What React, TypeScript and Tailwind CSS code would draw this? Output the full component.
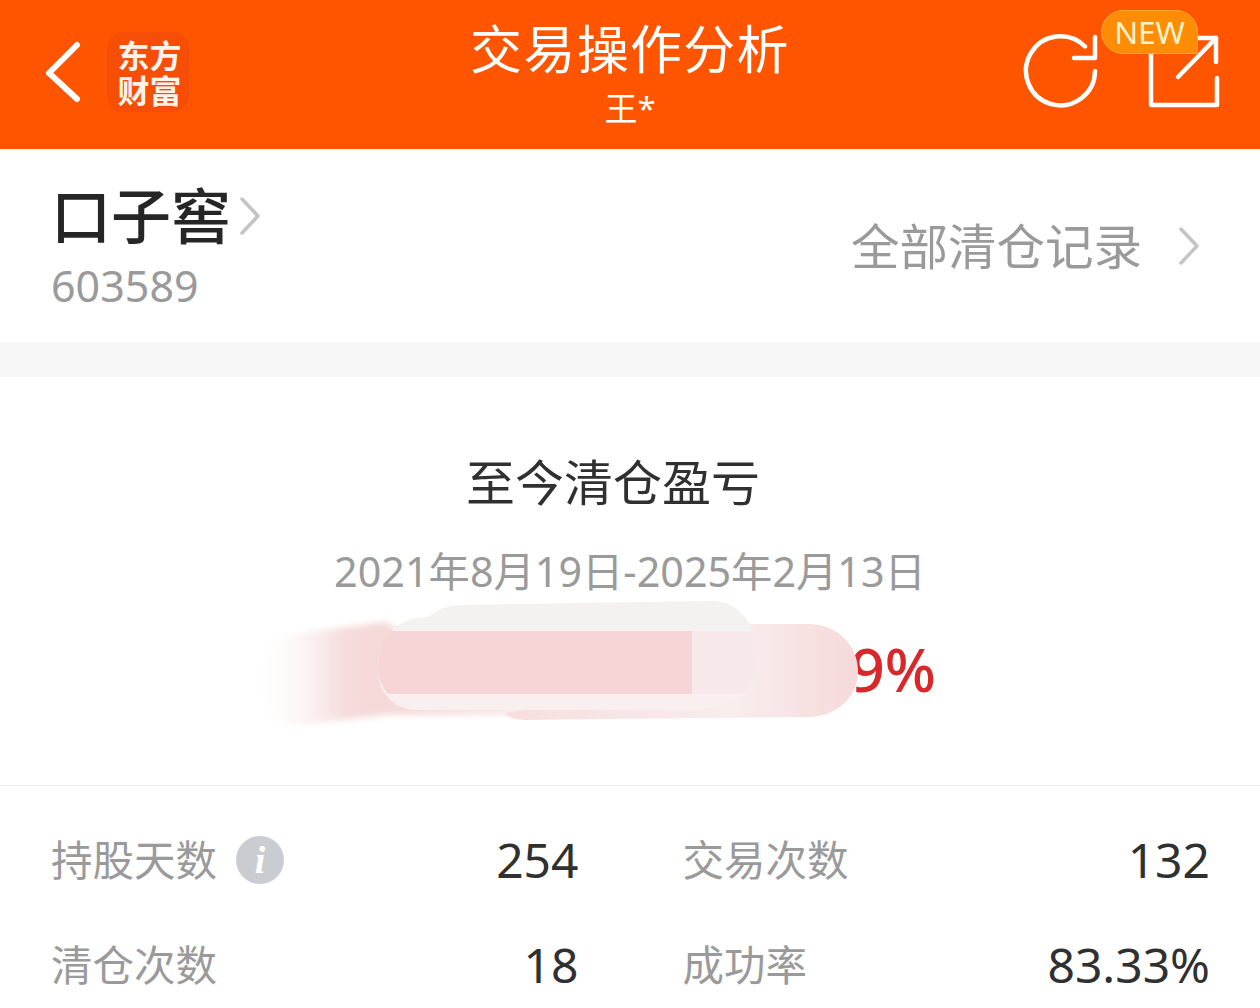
import React from 'react';

const cjk = { fontFamily: '"Noto Sans", "Noto Sans CJK SC", sans-serif' };

const stats = [
  { label: '清仓次数', value: '18', rightLabel: '成功率', rightValue: '83.33%' },
];

const Chevron: React.FC<{ className?: string }> = ({ className }) => (
  <svg viewBox="0 0 22 40" className={className} fill="none" stroke="currentColor" strokeWidth="3.5" strokeLinecap="round" strokeLinejoin="round">
    <path d="M3 3 L19 20 L3 37" />
  </svg>
);

// pasted-over smear hiding the real figure
const Smear: React.FC = () => (
  <svg className="absolute left-0 top-[-9px] w-[1260px] h-[140px]" viewBox="0 590 1260 140">
    <defs>
      <linearGradient id="leftFade" x1="258" x2="520" y1="0" y2="0" gradientUnits="userSpaceOnUse">
        <stop offset="0" stopColor="#f5d5d5" stopOpacity="0" />
        <stop offset="0.14" stopColor="#f7dfdf" stopOpacity="0.22" />
        <stop offset="0.32" stopColor="#f5d8d8" stopOpacity="0.85" />
        <stop offset="0.45" stopColor="#f5d8d8" />
        <stop offset="1" stopColor="#f9e8e8" />
      </linearGradient>
      <linearGradient id="rightFade" x1="510" x2="858" y1="0" y2="0" gradientUnits="userSpaceOnUse">
        <stop offset="0" stopColor="#f7dede" />
        <stop offset="0.65" stopColor="#f9eded" />
        <stop offset="1" stopColor="#f6d9da" />
      </linearGradient>
      <filter id="soften" x="-10%" y="-20%" width="120%" height="140%">
        <feGaussianBlur stdDeviation="3" />
      </filter>
    </defs>
    <path d="M258 680 C258 650 270 636 292 633 L385 621 L420 640 L520 700 L520 714 L385 714 L300 724 C275 726 258 710 258 680 Z" fill="url(#leftFade)" filter="url(#soften)" />
    <path d="M700 623 L808 623 C838 623 858 645 858 670 C858 695 838 716 808 716 L600 718 L525 719 C515 719 510 717 505 712 L700 680 Z" fill="url(#rightFade)" />
    <path d="M378 668 C378 640 392 617 428 616 C438 608 448 604 462 604 L712 600 C735 600 750 616 756 640 L757 660 C757 690 735 709 680 709 L420 709 C392 709 378 690 378 668 Z" fill="#f3f2f1" />
    <path d="M378 668 C378 650 382 640 388 630 L757 630 L757 660 C757 690 735 709 680 709 L420 709 C392 709 378 690 378 668 Z" fill="#f9efef" />
    <path d="M692 630 L757 630 L757 660 C757 672 752 684 742 693 L692 693 Z" fill="#f7e8e9" />
    <path d="M388 630 L692 630 L692 693 L388 693 C381 684 378 676 378 668 C378 650 382 640 388 630 Z" fill="#f5d5d6" />
  </svg>
);

export default function App() {
  return (
    <div className="w-[1260px] h-[1008px] overflow-hidden bg-white" style={cjk}>
      <header className="h-[149px] bg-[#ff5400] flex items-start justify-between relative">
        <div className="flex items-center gap-[25px] pl-[44px] pt-[32px]">
          <svg viewBox="0 0 38 64" className="w-[38px] h-[64px] text-white" fill="none" stroke="currentColor" strokeWidth="6" strokeLinecap="round" strokeLinejoin="round">
            <path d="M33 5 L5 33 L33 59" />
          </svg>
          <div className="w-[82px] h-[80px] pl-[3px] rounded-[16px] bg-[#f64e06] flex flex-col items-center justify-center text-[#fff3ea] text-[32px] leading-[35px] font-bold" style={{ fontFamily: '"Noto Sans CJK SC", sans-serif' }}>
            <span>东方</span>
            <span>财富</span>
          </div>
        </div>
        <div className="flex flex-col items-center pt-[14px] text-white absolute left-[470px] w-[320px]">
          <span className="text-[52px] leading-[70px] tracking-[1.3px] whitespace-nowrap">交易操作分析</span>
          <span className="text-[33px] leading-[44px] mt-[3px]">王*</span>
        </div>
        <div className="relative flex items-center gap-[46px] pr-[38px] pt-[33px]">
          <svg viewBox="0 0 80 76" className="w-[80px] h-[76px] text-white" fill="none" stroke="currentColor" strokeWidth="4.5" strokeLinecap="round" strokeLinejoin="round">
            <path d="M73 38 A34.5 34.5 0 1 1 63 13.5" />
            <path d="M73 4 L73 25 L52 25" />
          </svg>
          <svg viewBox="0 0 74 74" className="w-[74px] h-[74px] text-white" fill="none" stroke="currentColor" strokeWidth="4.5" strokeLinecap="round" strokeLinejoin="round">
            <path d="M3 10 L3 71 L69 71 L69 44" />
            <path d="M30 43 L68 4" />
            <path d="M48 4 L68 4 L68 28" />
          </svg>
          <span className="absolute left-[79px] top-[10px] w-[97px] h-[44px] flex items-center justify-center bg-[#ff8c05] border border-[#ffa63a] text-[#fff4c8] text-[31.5px] leading-none rounded-t-[22px] rounded-bl-[22px] rounded-br-[3px]">
            NEW
          </span>
        </div>
      </header>

      <section className="h-[193px] flex items-center justify-between pl-[51px] pr-[60px]">
        <div className="flex flex-col pt-[2px]">
          <div className="flex items-center gap-[8px]">
            <span className="text-[60px] leading-[76px] font-medium text-[#262626]">口子窖</span>
            <Chevron className="w-[22px] h-[40px] text-[#c4c4c4]" />
          </div>
          <span className="text-[43px] leading-[58px] mt-[3px] text-[#9a9a9a]">603589</span>
        </div>
        <div className="flex items-center gap-[36px] text-[#9a9a9a]">
          <span className="text-[48.5px] leading-[66px]">全部清仓记录</span>
          <Chevron className="w-[22px] h-[40px] text-[#c4c4c4]" />
        </div>
      </section>

      <div className="h-[35px] bg-[#f7f7f7]" />

      <section className="h-[409px] flex flex-col items-center border-b border-[#ececec] pt-[71px]">
        <span className="text-[49px] leading-[68px] text-[#303030] mr-[34px]">至今清仓盈亏</span>
        <span className="text-[41.3px] leading-[58px] text-[#9a9a9a] mt-[26px] whitespace-nowrap">2021年8月19日-2025年2月13日</span>
        <div className="relative w-full h-[140px] flex justify-end pr-[324px] pt-[29px]">
          <span className="text-[60px] leading-[80px] font-medium text-[#d9282c]">9%</span>
          <Smear />
        </div>
      </section>

      <section className="grid grid-cols-2 gap-x-[104px] pl-[51px] pr-[50px] pt-[46px]">
        <div className="flex items-center justify-between h-[56px]">
          <div className="flex items-center gap-[19px]">
            <span className="text-[41.5px] leading-[56px] text-[#9a9a9a]">持股天数</span>
            <span className="w-[48px] h-[48px] rounded-full bg-[#c9cdd2] flex items-center justify-center text-white text-[38px] italic font-bold leading-none" style={{ fontFamily: '"Liberation Serif", serif' }}>
              i
            </span>
          </div>
          <span className="text-[48px] leading-[56px] text-[#303030]">254</span>
        </div>
        <div className="flex items-center justify-between h-[56px]">
          <span className="text-[41.5px] leading-[56px] text-[#9a9a9a]">交易次数</span>
          <span className="text-[48px] leading-[56px] text-[#303030]">132</span>
        </div>
        {stats.map(row => (
          <React.Fragment key={row.label}>
            <div className="flex items-center justify-between h-[56px] mt-[49px]">
              <span className="text-[41.5px] leading-[56px] text-[#9a9a9a]">{row.label}</span>
              <span className="text-[48px] leading-[56px] text-[#303030]">{row.value}</span>
            </div>
            <div className="flex items-center justify-between h-[56px] mt-[49px]">
              <span className="text-[41.5px] leading-[56px] text-[#9a9a9a]">{row.rightLabel}</span>
              <span className="text-[48px] leading-[56px] text-[#303030]">{row.rightValue}</span>
            </div>
          </React.Fragment>
        ))}
      </section>
    </div>
  );
}
